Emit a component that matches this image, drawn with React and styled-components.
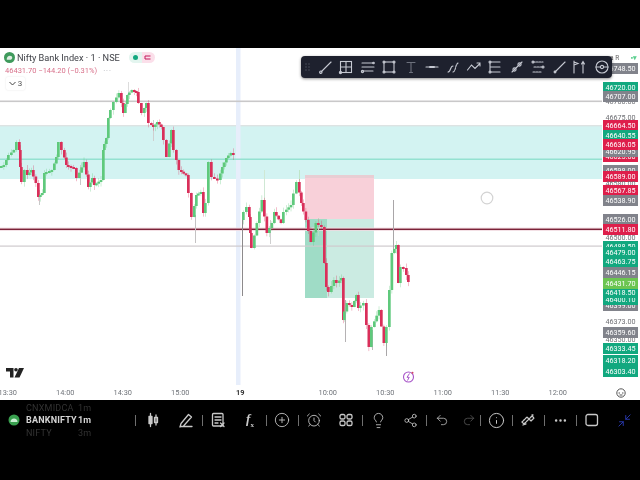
import React from 'react';
import styled, { createGlobalStyle } from 'styled-components';
import { CirclePlus, AlarmClock, Lightbulb, Share2, Undo2, Redo2, Info, Ellipsis, Minimize2 } from 'lucide-react';

const Global = createGlobalStyle`
  html, body { margin: 0; padding: 0; background: #000; }
  body { font-family: Roboto, "Liberation Sans", sans-serif; }
`;

const Frame = styled.div`
  width: 640px; height: 480px; display: flex; flex-direction: column;
  background: #000; overflow: hidden; filter: blur(0.5px);
`;
const TopBlack = styled.div`height: 48px; flex: none;`;
const Chart = styled.section`height: 352px; flex: none; background: #fff; display: flex; flex-direction: column; position: relative;`;
const PlotRow = styled.div`height: 337px; flex: none; display: flex; position: relative;`;
const Plot = styled.svg`width: 602px; height: 337px; flex: none; display: block;`;
const PriceAxis = styled.div`flex: 1; position: relative; overflow: hidden;`;
const COLORS = { green: '#12a87f', red: '#de1f4b', grey: '#81838b', lime: '#6cc551' };
const Tag = styled.div`
  position: absolute; left: 1px; width: 35px; height: 11px; top: ${p => p.$y - 53.5}px;
  background: ${p => COLORS[p.$c] || 'transparent'};
  color: ${p => (COLORS[p.$c] ? '#fff' : '#6e6f74')};
  font-size: 7.2px; line-height: 11px; text-align: center;
`;
const AxisHead = styled.div`
  position: absolute; left: 8px; right: 3px; top: 5px; height: 9px; display: flex; align-items: center;
  justify-content: space-between; font-size: 6.5px; color: #666;
`;
const AxisHeadMark = styled.span`color: #5ccf8f; font-weight: 700;`;
const TimeAxis = styled.div`flex: 1; display: flex; align-items: center; overflow: hidden; color: #70747a; font-size: 7.4px;`;
const Ticks = styled.div`display: flex; margin-left: -21px; flex: none;`;
const Tick = styled.span`
  width: 57.5px; box-sizing: border-box; flex: none; text-align: center; white-space: nowrap;
  padding-left: ${p => (p.$bold ? 5 : 0)}px; font-weight: ${p => (p.$bold ? 700 : 400)}; color: ${p => (p.$bold ? '#333' : 'inherit')};
`;
const TickGap = styled.span`width: 32.5px; flex: none;`;
const AxisCorner = styled.svg`width: 10px; height: 10px; margin-left: 29px; flex: none;`;

const Legend = styled.div`position: absolute; left: 4px; top: 3px; display: flex; flex-direction: column; align-items: flex-start;`;
const LegendTitle = styled.div`display: flex; align-items: center; height: 13px; color: #3f4147; font-size: 9.2px; white-space: nowrap;`;
const LegendLogo = styled.svg`width: 11px; height: 11px; margin-right: 2px; flex: none;`;
const Pill = styled.span`
  width: 13px; height: 11px; display: flex; align-items: center; justify-content: center;
  background: ${p => p.$bg}; border-radius: ${p => p.$r};
`;
const Pills = styled.span`display: flex; margin-left: 9px;`;
const Dot = styled.i`width: 5px; height: 5px; border-radius: 50%; background: #12a87f; display: block;`;
const LegendValue = styled.div`display: flex; align-items: center; height: 10px; margin-top: 1px; padding-left: 1px; color: #d8708a; font-size: 7.5px; white-space: nowrap;`;
const LegendMore = styled.span`color: #a9abb1; margin-left: 6px; letter-spacing: 1px;`;
const Collapse = styled.div`
  margin: 2px 0 0 2px; height: 13px; width: 19px; display: flex; align-items: center; justify-content: center; gap: 2px;
  color: #555; font-size: 8px; background: #fff; border-radius: 2px; box-shadow: 0 0 2px #e2e2e2;
`;
const DrawBar = styled.div`
  position: absolute; left: 301px; top: 8px; width: 311px; height: 22px; box-sizing: border-box; padding-left: 1px;
  display: flex; align-items: center; background: #1e212e; border-radius: 4px; box-shadow: 0 1px 3px rgba(0,0,0,.45);
`;
const Grip = styled.svg`width: 12px; height: 10px; flex: none;`;
const DrawIcon = styled.svg`
  width: 16px; height: 16px; flex: none; margin-left: ${p => p.$gap}px; fill: none;
  stroke: ${p => (p.$dim ? '#6d717d' : '#c6c9d2')}; stroke-width: 1.1; stroke-linecap: round;
`;
const Brand = styled.svg`position: absolute; left: 6px; bottom: 7px; width: 18px; height: 10px;`;

const BottomBar = styled.nav`height: 40px; flex: none; display: flex; align-items: center; background: #000; color: #d8d8d8;`;
const SymbolList = styled.div`width: 135px; height: 40px; flex: none; display: flex; flex-direction: column; justify-content: center; overflow: hidden;`;
const SymbolRow = styled.div`
  height: 12.5px; flex: none; display: flex; align-items: center; padding-left: 8px; font-size: 9px; white-space: nowrap;
  font-weight: ${p => (p.$active ? 700 : 400)}; letter-spacing: .2px;
  color: ${p => (p.$active ? '#d5d5d5' : '#333')};
`;
const SymbolMark = styled.svg`width: 12px; height: 12px; flex: none; margin-right: 6px; visibility: ${p => (p.$show ? 'visible' : 'hidden')};`;
const SymbolName = styled.span`width: 52px; flex: none; overflow: hidden;`;
const Sep = styled.i`width: 1px; height: 11px; flex: none; margin-right: -1px; background: #6f6f6f; display: block;`;
const Slot = styled.div`
  width: ${p => p.$w || 32}px; height: 24px; flex: none; display: flex; align-items: center; justify-content: center;
  color: ${p => p.$color || '#c9c9c9'};
`;
const SlotSvg = styled.svg`width: 16px; height: 16px; fill: none; stroke: currentColor; stroke-width: 1.3; stroke-linecap: round; stroke-linejoin: round;`;
const Fx = styled.span`font-family: "Liberation Serif", serif; font-style: italic; font-weight: 700; font-size: 13px; color: #c9c9c9;`;
const FxSub = styled.sub`font-size: 7px; font-style: normal;`;
const BottomBlack = styled.div`flex: 1;`;

const keys = [[0,167],[5,165],[7,160],[10,155],[15,150],[18,142],[19,150],[20,167],[23,182],[26,170],[28,175],[32,170],[37,183],[39,197],[43,193],[45,173],[48,172],[53,170],[57,157],[60,142],[63,150],[67,165],[75,168],[78,178],[85,162],[89,187],[93,178],[95,185],[102,180],[103,150],[107,138],[109,118],[115,102],[120,93],[124,113],[128,95],[133,90],[137,92],[140,103],[143,113],[147,103],[150,123],[154,127],[158,122],[162,127],[165,140],[168,157],[172,130],[175,150],[180,170],[187,175],[190,193],[193,217],[197,195],[202,192],[204,213],[207,203],[210,162],[213,177],[219,180],[223,167],[227,158],[232,153],[235,155]];
const keys2 = [[242,220],[245,212],[248,207],[249,217],[250,233],[253,248],[258,223],[263,200],[268,233],[273,223],[275,212],[282,223],[285,212],[292,205],[298,182],[302,203],[307,220],[312,242],[317,223],[323,227],[325,263],[327,287],[330,292],[335,280],[338,283],[342,278],[343,320],[348,303],[353,307],[357,295],[359,308],[365,303],[370,347],[373,327],[380,310],[385,343],[388,327],[393,253],[397,245],[399,283],[402,267],[405,268],[409,282]];

const rnd = i => { const s = Math.sin(i * 12.9898) * 43758.5453; return s - Math.floor(s); };
function build(list, seed) {
  const out = [];
  let k = seed;
  for (let i = 0; i < list.length - 1; i++) {
    const [x0, y0] = list[i];
    const [x1, y1] = list[i + 1];
    const n = Math.max(1, Math.round((x1 - x0) / 2.6));
    for (let j = 0; j < n; j++) {
      const a = y0 + ((y1 - y0) * j) / n;
      const b = y0 + ((y1 - y0) * (j + 1)) / n;
      const x = x0 + ((x1 - x0) * j) / n;
      k++;
      out.push({ x, top: Math.min(a, b), bot: Math.max(a, b), up: b < a, wu: rnd(k) * 5, wd: rnd(k + 77) * 5 });
    }
  }
  return out;
}
const candles = [...build(keys, 1), ...build(keys2, 300)];
const longWicks = [[242,220,296,'#8d8a8c'],[393,200,253,'#a9a6a8'],[345,300,342,'#b5b2b4'],[386,330,356,'#a9a6a8'],[372,330,350,'#bdbabc'],[195,215,243,'#c4c2c3'],[264,170,200,'#cfe8d4'],[299,170,184,'#bfe6c8'],[39,190,205,'#c8c8c8'],[80,165,185,'#c8c8c8'],[128,82,95,'#dcdcdc'],[153,120,141,'#cfcfcf'],[318,218,236,'#b9dcc4'],[270,220,244,'#cfcfcf']];

const tags = [
  [68,'grey','46748.50'],[87,'green','46720.00'],[101,'', '46700.00'],[96,'grey','46707.00'],[117,'', '46675.00'],
  [125,'red','46664.50'],[135,'green','46640.55'],[156,'red','46625.00'],[151,'grey','46620.95'],[144,'red','46636.05'],
  [170,'grey','46598.00'],[176,'red','46589.00'],[183,'', '46580.00'],[190,'red','46567.85'],[200,'grey','46538.90'],
  [219,'grey','46526.00'],[237,'', '46500.00'],[229,'red','46511.80'],[246,'green','46488.50'],[252,'green','46479.00'],[261,'green','46463.75'],
  [272,'grey','46446.15'],[305,'grey','46399.00'],[299,'green','46400.10'],[292,'green','46418.50'],[283,'lime','46431.70'],
  [321,'', '46373.00'],[339,'', '46350.00'],[332,'grey','46359.60'],[348,'green','46333.45'],[360,'green','46318.20'],[371,'green','46303.40'],
];

const leftTicks = ['13:30', '14:00', '14:30', '15:00', '19'];
const rightTicks = ['10:00', '10:30', '11:00', '11:30', '12:00'];

const drawIcons = [
  [4, <><path d="M3 13L13 3"/><circle cx="2.8" cy="13.2" r="1.2"/></>],
  [4, <><rect x="2.5" y="2.5" width="11" height="11"/><path d="M8 2.5v11M2.5 8h11"/><circle cx="2.5" cy="13.5" r="1.1"/></>],
  [6, <><path d="M2 4h11M2 8h12M2 12h11"/><circle cx="2.5" cy="12.5" r="1.1"/><circle cx="13.5" cy="4" r=".8"/></>],
  [5, <><rect x="3" y="3" width="10" height="10"/><circle cx="3" cy="3" r="1"/><circle cx="13" cy="3" r="1"/><circle cx="3" cy="13" r="1"/><circle cx="13" cy="13" r="1"/></>],
  [6, <path d="M4 3.5h8M8 3.5v10M6.5 13.5h3" />, true],
  [5, <><path d="M2 8h12"/><path d="M6 8h4" strokeWidth="2"/></>],
  [6, <><path d="M2 13c3 0 2-6 5-6"/><path d="M7 13c3-1 2-7 5-9" strokeDasharray="2 1"/></>],
  [4, <path d="M1.5 11l4-5 3.5 3.5 5-5M11 4h3v3"/>],
  [5, <><path d="M3 3v5h10M3 8v5h10M3 3h10"/><circle cx="3" cy="3" r="1"/><circle cx="3" cy="13" r="1"/></>],
  [6, <><path d="M3 13L13 3"/><circle cx="5.5" cy="10.5" r="1.6"/><circle cx="10.5" cy="5.5" r="1.6"/></>],
  [5, <><path d="M3 3h10M4 8h9M3 13h8" strokeDasharray="2 1"/><circle cx="3" cy="3" r="1"/><circle cx="13" cy="8" r="1"/></>],
  [6, <><path d="M3 13L13 3"/><circle cx="3" cy="13" r=".9"/></>],
  [3, <><path d="M3 2v12M3 3l4 1.5L3 6"/><path d="M12 14V3M10.5 5L12 2.5 13.5 5"/></>],
  [7, <><circle cx="8" cy="8" r="6"/><circle cx="8" cy="8" r="1.6"/><path d="M2 8h4.5M9.5 8H14"/></>],
];

const Icon = ({ children }) => <SlotSvg viewBox="0 0 16 16">{children}</SlotSvg>;

export default function App() {
  return (
    <Frame>
      <Global />
      <TopBlack />
      <Chart>
        <PlotRow>
          <Plot viewBox="0 48 602 337">
            <rect x="0" y="126" width="602" height="53" fill="#d3f3f2" />
            <rect x="0" y="125" width="602" height="1.4" fill="#dde3e3" />
            <rect x="236" y="48" width="4.5" height="337" fill="#e7eefb" />
            <rect x="0" y="100.5" width="602" height="1.6" fill="#c9c8c9" />
            <rect x="0" y="158.6" width="602" height="1.2" fill="#84dcc9" />
            <rect x="305" y="175" width="69" height="44" fill="#f8d0d9" />
            <rect x="305" y="175" width="69" height="3" fill="#e8cdd3" />
            <rect x="305" y="219" width="69" height="79" fill="#cbebe2" />
            <rect x="305" y="219" width="22" height="79" fill="#9fdcc6" />
            <rect x="0" y="245.5" width="602" height="1.2" fill="#cfcacd" />
            <rect x="0" y="227.6" width="602" height="3.2" fill="#f0d9df" />
            <rect x="0" y="228.6" width="602" height="1.4" fill="#7b2238" />
            {longWicks.map(([x, a, b, c], i) => <rect key={i} x={x} y={a} width="1" height={b - a} fill={c} />)}
            {candles.map((c, i) => (
              <g key={i} fill={c.up ? '#5fc97c' : '#d92f5a'}>
                <rect x={c.x + 1} y={c.top - c.wu} width=".7" height={c.bot - c.top + c.wu + c.wd} opacity=".45" />
                <rect x={c.x} y={c.top} width="2.7" height={Math.max(2, c.bot - c.top)} />
              </g>
            ))}
            <circle cx="487" cy="198" r="5.8" fill="#fff" stroke="#d3d3d3" strokeWidth="1.2" />
            <circle cx="408.5" cy="377" r="5" fill="#fff" stroke="#a855c9" strokeWidth="1.1" />
            <path d="M409.5 373.5l-2.5 3.8h2.2l-1.7 3.2" fill="none" stroke="#a855c9" strokeWidth="1" />
            <circle cx="412.5" cy="372.8" r="1" fill="#d1485f" />
          </Plot>
          <PriceAxis>
            <AxisHead>a R<AxisHeadMark>▪▾</AxisHeadMark></AxisHead>
            {tags.map(([y, c, t], i) => <Tag key={i} $y={y} $c={c}>{t}</Tag>)}
          </PriceAxis>
          <Legend>
            <LegendTitle>
              <LegendLogo viewBox="0 0 12 12">
                <circle cx="6" cy="6" r="6" fill="#3f9a5c" />
                <path d="M3 7.5c0-2 1.5-3.5 3.5-3.5 1.5 0 2.5 1 2.5 2.2 0 1.4-1.2 2.3-2.6 2.3H3z" fill="#dfeee3" />
              </LegendLogo>
              Nifty Bank Index · 1 · NSE
              <Pills>
                <Pill $bg="#e3f5ef" $r="6px 0 0 6px"><Dot /></Pill>
                <Pill $bg="#fbdfea" $r="0 6px 6px 0">
                  <svg width="8" height="7" viewBox="0 0 8 7" fill="none" stroke="#c2185b" strokeWidth="1"><path d="M1 2h5.5M1 5h5.5M1 2v3" /></svg>
                </Pill>
              </Pills>
            </LegendTitle>
            <LegendValue>46431.70 −144.20 (−0.31%)<LegendMore>···</LegendMore></LegendValue>
            <Collapse>
              <svg width="7" height="5" viewBox="0 0 7 5" fill="none" stroke="#444" strokeWidth="1"><path d="M.5 1l3 3 3-3" /></svg>
              3
            </Collapse>
          </Legend>
          <DrawBar>
            <Grip viewBox="0 0 12 10" fill="#4a4e5c">
              <circle cx="4" cy="2" r=".8" /><circle cx="7" cy="2" r=".8" />
              <circle cx="4" cy="5" r=".8" /><circle cx="7" cy="5" r=".8" />
              <circle cx="4" cy="8" r=".8" /><circle cx="7" cy="8" r=".8" />
            </Grip>
            {drawIcons.map(([gap, body, dim], i) => (
              <DrawIcon key={i} viewBox="0 0 16 16" $gap={gap} $dim={dim}>{body}</DrawIcon>
            ))}
          </DrawBar>
          <Brand viewBox="0 0 18 10" fill="#222">
            <path d="M0 0h7.5v9.5H4V3.5H0z" />
            <circle cx="10" cy="1.8" r="1.8" />
            <path d="M8.5 9.5L13 0h5l-4.5 9.5z" />
          </Brand>
        </PlotRow>
        <TimeAxis>
          <Ticks>
            {leftTicks.map(t => <Tick key={t} $bold={t === '19'}>{t}</Tick>)}
            <TickGap />
            {rightTicks.map(t => <Tick key={t}>{t}</Tick>)}
          </Ticks>
          <AxisCorner viewBox="0 0 10 10" fill="none" stroke="#555" strokeWidth="1">
            <circle cx="5" cy="5" r="4.2" />
            <path d="M2.5 5h1.5M6 5h1.5M3.5 7h3" />
          </AxisCorner>
        </TimeAxis>
      </Chart>
      <BottomBar>
        <SymbolList>
          <SymbolRow><SymbolMark /><SymbolName>CNXMIDCA</SymbolName>1m</SymbolRow>
          <SymbolRow $active>
            <SymbolMark viewBox="0 0 12 12" $show>
              <circle cx="6" cy="6" r="5.5" fill="#39a04f" />
              <path d="M2.5 8c0-2 1.5-3.5 3.5-3.5 2 0 3.5 1.2 3.5 3.5z" fill="#c9efd3" />
            </SymbolMark>
            <SymbolName>BANKNIFTY</SymbolName>1m
          </SymbolRow>
          <SymbolRow><SymbolMark /><SymbolName>NIFTY</SymbolName>3m</SymbolRow>
        </SymbolList>
        <Sep />
        <Slot $w={35}>
          <Icon><path d="M5.5 1.5v13M11 3v10" /><rect x="4" y="4.5" width="3" height="7" fill="currentColor" /><rect x="9.5" y="5.5" width="3" height="5" /></Icon>
        </Slot>
        <Slot><Icon><path d="M3 11.5L10.5 2.5l3 2.5-8 9-3.5 1zM2 14.5h12" /></Icon></Slot>
        <Sep />
        <Slot><Icon><rect x="2.5" y="1.5" width="10.5" height="12.5" rx="1" /><path d="M5 5h6M5 8h6M5 11h3M10.5 11l3.5 3.5M14 11l-3.5 3.5" /></Icon></Slot>
        <Slot><Fx>f<FxSub>x</FxSub></Fx></Slot>
        <Sep />
        <Slot><CirclePlus size={16} strokeWidth={1.3} /></Slot>
        <Sep />
        <Slot><AlarmClock size={16} strokeWidth={1.3} /></Slot>
        <Slot><Icon><rect x="2" y="2.5" width="5" height="4.5" rx="1.6" /><rect x="9" y="2.5" width="5" height="4.5" rx="1.6" /><rect x="2" y="9" width="5" height="4.5" rx="1.6" /><rect x="9" y="9" width="5" height="4.5" rx="1.6" /></Icon></Slot>
        <Sep />
        <Slot><Lightbulb size={17} strokeWidth={1.2} /></Slot>
        <Slot><Share2 size={15} strokeWidth={1.3} /></Slot>
        <Sep />
        <Slot><Undo2 size={14} strokeWidth={1.3} /></Slot>
        <Slot $w={22} $color="#5c5c5c"><Redo2 size={14} strokeWidth={1.3} /></Slot>
        <Sep />
        <Slot><Info size={17} strokeWidth={1.4} /></Slot>
        <Sep />
        <Slot><Icon><path d="M2 10l5-5 2 2-5 5zM9 7l3-3 2 2-3 3zM3 13l3-1M12 3l1 0" strokeDasharray="1.6 .8" /></Icon></Slot>
        <Sep />
        <Slot><Ellipsis size={15} strokeWidth={2} /></Slot>
        <Sep />
        <Slot><Icon><rect x="2" y="2.5" width="11.5" height="11" rx="2" /></Icon></Slot>
        <Slot $color="#2a3ab0"><Minimize2 size={15} strokeWidth={1.5} /></Slot>
      </BottomBar>
      <BottomBlack />
    </Frame>
  );
}
